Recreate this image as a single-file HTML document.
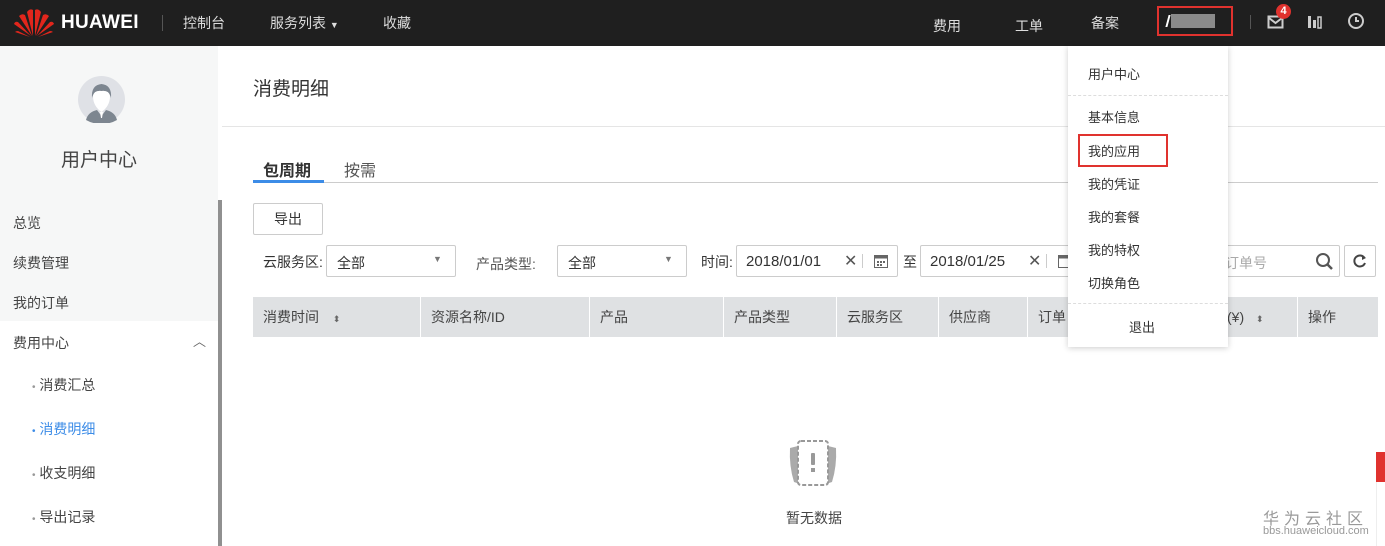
<!DOCTYPE html>
<html><head><meta charset="utf-8"><style>
*{margin:0;padding:0;box-sizing:border-box}
body{width:1385px;height:546px;overflow:hidden;background:#fff;font-family:"Liberation Sans","Noto Sans CJK SC",sans-serif;font-size:14px;color:#333;position:relative}
.a{position:absolute}
.top{left:0;top:0;width:1385px;height:46px;background:#1f1f1f;color:#ddd}
.top span{position:absolute;top:13px;font-size:14px;color:#ddd}
.side{left:0;top:46px;width:218px;height:275px;background:#f6f7f7}
.nav{position:absolute;font-size:14px;color:#444}
.box{position:absolute;border:1px solid #ccc;border-radius:2px;background:#fff}
.hd{position:absolute;top:297px;height:40px;background:#dfe1e3}
.hd div{position:absolute;top:0;height:40px;line-height:40px;font-size:14px;color:#444;padding-left:10px;border-left:1px solid #fff}
.dd{left:1068px;top:46px;width:160px;height:301px;background:#fff;box-shadow:0 1px 6px rgba(0,0,0,.2)}
.dd div{position:absolute;left:20px;font-size:13px;color:#333}
</style></head><body>
<div class="a top">
 <svg class="a" style="left:13px;top:6px" width="42" height="32" viewBox="0 0 42 32">
  <g fill="#e1261c">
   <path d="M20 30 L14 6 Q17 2 20 4Z"/><path d="M22 30 L28 6 Q25 2 22 4Z"/>
   <path d="M19 30 L6 10 Q9 7 12 9Z"/><path d="M23 30 L36 10 Q33 7 30 9Z"/>
   <path d="M18 30 L1 18 Q2 15 5 16Z"/><path d="M24 30 L41 18 Q40 15 37 16Z"/>
   <path d="M17 31 L2 26 Q3 25 5 25Z"/><path d="M25 31 L40 26 Q39 25 37 25Z"/>
  </g></svg>
 <div class="a" style="left:61px;top:12px;font-size:19px;font-weight:bold;color:#fff;letter-spacing:.3px">HUAWEI</div>
 <div class="a" style="left:162px;top:15px;width:1px;height:16px;background:#555"></div>
 <span style="left:183px">控制台</span>
 <span style="left:270px">服务列表 <small style="font-size:9px">▼</small></span>
 <span style="left:383px">收藏</span>
 <span style="left:933px;top:16px">费用</span>
 <span style="left:1015px;top:16px">工单</span>
 <span style="left:1091px">备案</span>
 <div class="a" style="left:1157px;top:6px;width:76px;height:30px;border:2px solid #e0322e"></div>
 <div class="a" style="left:1167px;top:15px;width:2px;height:12px;background:#fff;transform:skewX(-15deg)"></div>
 <div class="a" style="left:1171px;top:14px;width:44px;height:14px;background:#8a8a8a"></div>
 <div class="a" style="left:1250px;top:15px;width:1px;height:14px;background:#555"></div>
 <svg class="a" style="left:1267px;top:13px" width="18" height="16"><rect x="1.5" y="3.5" width="14" height="11" fill="none" stroke="#ccc" stroke-width="2"/><path d="M2 5 L8.5 10 L15 5" fill="none" stroke="#ccc" stroke-width="2"/></svg>
 <div class="a" style="left:1276px;top:4px;width:15px;height:15px;border-radius:50%;background:#e0322e;color:#fff;font-size:11px;font-weight:bold;text-align:center;line-height:15px">4</div>
 <svg class="a" style="left:1307px;top:13px" width="18" height="16"><rect x="1" y="3" width="3" height="12" fill="#ccc"/><rect x="6" y="7" width="3" height="8" fill="#ccc"/><rect x="11" y="4" width="3" height="11" fill="none" stroke="#ccc" stroke-width="1.5"/></svg>
 <svg class="a" style="left:1347px;top:12px" width="18" height="18"><circle cx="9" cy="9" r="7" fill="none" stroke="#ccc" stroke-width="2"/><path d="M9 5 V9 H12" fill="none" stroke="#ccc" stroke-width="2"/></svg>
</div>
<div class="a side"></div>
<div class="a" style="left:218px;top:200px;width:4px;height:346px;background:#909090"></div>
<svg class="a" style="left:78px;top:76px" width="47" height="47" viewBox="0 0 47 47">
 <circle cx="23.5" cy="23.5" r="23.5" fill="#dfe1e6"/>
 <path d="M14 22 Q13 9 23.5 8 Q34 9 33 22 Q31 14 23.5 15 Q16 14 14 22Z" fill="#7d8690"/>
 <path d="M15 20 Q16 14 23.5 15 Q31 14 32 20 Q32 30 23.5 36 Q15 30 15 20Z" fill="#fff"/>
 <path d="M8 44 Q10 36 19 34 L23.5 40 L28 34 Q37 36 39 44 Q32 48 23.5 48 Q15 48 8 44Z" fill="#7d8690"/>
 <path d="M22 36 L25 36 L24 42 L23 42Z" fill="#fff"/>
</svg>
<div class="a" style="left:61px;top:145px;font-size:19px;color:#444">用户中心</div>
<div class="nav" style="left:13px;top:213px">总览</div>
<div class="nav" style="left:13px;top:253px">续费管理</div>
<div class="nav" style="left:13px;top:293px">我的订单</div>
<div class="nav" style="left:13px;top:333px">费用中心</div>
<div class="nav" style="left:193px;top:331px;font-size:13px;color:#666">︿</div>
<div class="nav" style="left:32px;top:375px"><span style="color:#999;font-size:10px">•</span> 消费汇总</div>
<div class="nav" style="left:32px;top:419px;color:#3c8ce7"><span style="font-size:10px">•</span> 消费明细</div>
<div class="nav" style="left:32px;top:463px"><span style="color:#999;font-size:10px">•</span> 收支明细</div>
<div class="nav" style="left:32px;top:507px"><span style="color:#999;font-size:10px">•</span> 导出记录</div>

<div class="a" style="left:253px;top:74px;font-size:19px;color:#333">消费明细</div>
<div class="a" style="left:222px;top:126px;width:1163px;height:1px;background:#e5e5e5"></div>
<div class="a" style="left:263px;top:157px;font-size:16px;font-weight:bold;color:#333">包周期</div>
<div class="a" style="left:344px;top:157px;font-size:16px;color:#555">按需</div>
<div class="a" style="left:253px;top:182px;width:1125px;height:1px;background:#ccc"></div>
<div class="a" style="left:253px;top:180px;width:71px;height:3px;background:#3c8ce7"></div>
<div class="box" style="left:253px;top:203px;width:70px;height:32px;text-align:center;line-height:30px">导出</div>
<div class="a" style="left:263px;top:252px">云服务区:</div>
<div class="box" style="left:326px;top:245px;width:130px;height:32px"><span class="a" style="left:10px;top:7px">全部</span><span class="a" style="left:106px;top:8px;font-size:9px;color:#777">▼</span></div>
<div class="a" style="left:476px;top:254px;color:#555">产品类型:</div>
<div class="box" style="left:557px;top:245px;width:130px;height:32px"><span class="a" style="left:10px;top:7px">全部</span><span class="a" style="left:106px;top:8px;font-size:9px;color:#777">▼</span></div>
<div class="a" style="left:701px;top:252px">时间:</div>
<div class="box" style="left:736px;top:245px;width:162px;height:32px"><span class="a" style="left:9px;top:7px;font-size:15px">2018/01/01</span><span class="a" style="left:107px;top:5px;font-size:16px;color:#555">✕</span><span class="a" style="left:125px;top:8px;width:1px;height:14px;background:#ccc"></span>
 <svg class="a" style="left:136px;top:7px" width="16" height="16"><rect x="1.5" y="2.5" width="13" height="12" fill="none" stroke="#666"/><rect x="1.5" y="2.5" width="13" height="3" fill="#666"/><g fill="#666"><rect x="4" y="8" width="2" height="2"/><rect x="7" y="8" width="2" height="2"/><rect x="10" y="8" width="2" height="2"/><rect x="4" y="11" width="2" height="2"/><rect x="7" y="11" width="2" height="2"/></g></svg></div>
<div class="a" style="left:903px;top:252px">至</div>
<div class="box" style="left:920px;top:245px;width:160px;height:32px"><span class="a" style="left:9px;top:7px;font-size:15px">2018/01/25</span><span class="a" style="left:107px;top:5px;font-size:16px;color:#555">✕</span><span class="a" style="left:125px;top:8px;width:1px;height:14px;background:#ccc"></span>
 <svg class="a" style="left:136px;top:7px" width="16" height="16"><rect x="1.5" y="2.5" width="13" height="12" fill="none" stroke="#666"/><rect x="1.5" y="2.5" width="13" height="3" fill="#666"/></svg></div>
<div class="box" style="left:1200px;top:245px;width:140px;height:32px"><span class="a" style="left:24px;top:7px;color:#aaa">订单号</span>
 <svg class="a" style="left:114px;top:6px" width="20" height="20"><circle cx="8" cy="8" r="6" fill="none" stroke="#555" stroke-width="2"/><path d="M12.5 12.5 L17 17" stroke="#555" stroke-width="2.5"/></svg></div>
<div class="box" style="left:1344px;top:245px;width:32px;height:32px"><svg class="a" style="left:7px;top:7px" width="16" height="16"><path d="M12.5 5 A5.5 5.5 0 1 0 13 10" fill="none" stroke="#444" stroke-width="2"/><path d="M10 2 L14 5 L10 7Z" fill="#444"/></svg></div>

<div class="hd" style="left:253px;width:1125px">
 <div style="left:0;border:none">消费时间 <span style="margin-left:10px;font-size:9px;color:#666">⬍</span></div>
 <div style="left:167px">资源名称/ID</div>
 <div style="left:336px">产品</div>
 <div style="left:470px">产品类型</div>
 <div style="left:583px">云服务区</div>
 <div style="left:685px">供应商</div>
 <div style="left:774px">订单</div>
 <div style="left:960px;border:none;padding-left:0">额(¥) <span style="margin-left:8px;font-size:9px;color:#666">⬍</span></div>
 <div style="left:1044px">操作</div>
</div>

<div class="a dd">
 <div style="top:18px">用户中心</div>
 <div class="a" style="left:0;top:49px;width:160px;border-top:1px dashed #ddd"></div>
 <div style="top:61px">基本信息</div>
 <div style="top:95px">我的应用</div>
 <div style="top:128px">我的凭证</div>
 <div style="top:161px">我的套餐</div>
 <div style="top:194px">我的特权</div>
 <div style="top:227px">切换角色</div>
 <div class="a" style="left:0;top:257px;width:160px;border-top:1px dashed #ddd"></div>
 <div style="top:271px;left:61px">退出</div>
</div>
<div class="a" style="left:1078px;top:134px;width:90px;height:33px;border:2px solid #e0322e"></div>
<div class="a" style="left:1215px;top:40px;width:0;height:0;border:6px solid transparent;border-bottom-color:#fff"></div>

<svg class="a" style="left:786px;top:436px" width="54" height="54" viewBox="0 0 54 54">
 <path d="M4 12 Q3 30 8 46 L14 48 L12 10Z" fill="#aaa"/><path d="M50 12 Q51 30 46 46 L40 48 L42 10Z" fill="#aaa"/>
 <rect x="12" y="5" width="30" height="44" rx="3" fill="#fff" stroke="#999" stroke-width="2" stroke-dasharray="4 2"/>
 <rect x="25" y="17" width="4" height="12" rx="1" fill="#999"/><rect x="25" y="32" width="4" height="4" fill="#999"/>
</svg>
<div class="a" style="left:786px;top:508px;font-size:14px;color:#444">暂无数据</div>

<div class="a" style="left:1376px;top:452px;width:9px;height:30px;background:#e0322e"></div>
<div class="a" style="left:1376px;top:482px;width:9px;height:64px;background:#fff;border-left:1px solid #eee"></div>
<div class="a" style="left:1263px;top:505px;font-size:16px;color:#999;letter-spacing:5px">华为云社区</div>
<div class="a" style="left:1263px;top:525px;font-size:11px;color:#999">bbs.huaweicloud.com</div>
</body></html>
